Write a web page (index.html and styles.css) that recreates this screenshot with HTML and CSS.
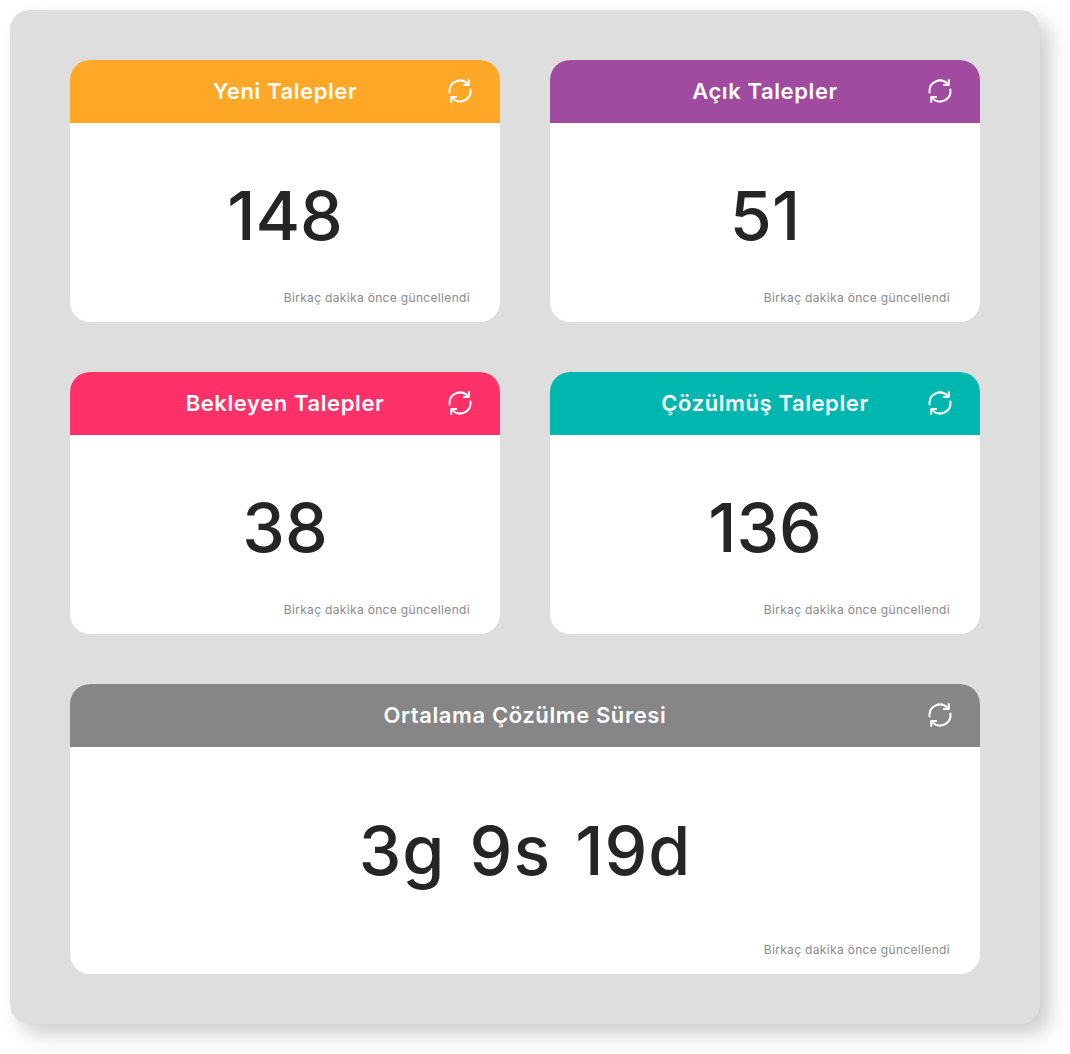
FILE: index.html
```html
<!DOCTYPE html>
<html lang="en">
<head>
    <meta charset="UTF-8">
    <meta name="viewport" content="width=device-width, initial-scale=1.0">
    <title>Talepler</title>
    <link rel="stylesheet" href="styles.css">
</head>
<body>
    <svg class="icon-defs" width="0" height="0">
        <symbol id="sync" viewBox="0 0 24 24">
            <g fill="none" stroke="currentColor" stroke-width="2" stroke-linecap="round" stroke-linejoin="round">
                <path d="M1.6 13.4A10.5 10.5 0 0 1 19.4 4.6"/>
                <path d="M22.4 10.6A10.5 10.5 0 0 1 4.6 19.4"/>
                <path d="M20.8 1V5.9H15.9"/>
                <path d="M3.2 23V18.1H8.1"/>
            </g>
        </symbol>
    </svg>

    <div class="panel">
        <section class="card">
            <header class="card-head orange">
                <h2>Yeni Talepler</h2>
                <svg class="refresh"><use href="#sync"></use></svg>
            </header>
            <div class="card-value">148</div>
            <p class="card-note">Birkaç dakika önce güncellendi</p>
        </section>

        <section class="card">
            <header class="card-head purple">
                <h2>Açık Talepler</h2>
                <svg class="refresh"><use href="#sync"></use></svg>
            </header>
            <div class="card-value">51</div>
            <p class="card-note">Birkaç dakika önce güncellendi</p>
        </section>

        <section class="card">
            <header class="card-head pink">
                <h2>Bekleyen Talepler</h2>
                <svg class="refresh"><use href="#sync"></use></svg>
            </header>
            <div class="card-value">38</div>
            <p class="card-note">Birkaç dakika önce güncellendi</p>
        </section>

        <section class="card">
            <header class="card-head teal">
                <h2>Çözülmüş Talepler</h2>
                <svg class="refresh"><use href="#sync"></use></svg>
            </header>
            <div class="card-value">136</div>
            <p class="card-note">Birkaç dakika önce güncellendi</p>
        </section>

        <section class="card card-wide">
            <header class="card-head gray">
                <h2>Ortalama Çözülme Süresi</h2>
                <svg class="refresh"><use href="#sync"></use></svg>
            </header>
            <div class="card-value">3g 9s 19d</div>
            <p class="card-note">Birkaç dakika önce güncellendi</p>
        </section>
    </div>
</body>
</html>
```

FILE: styles.css
```css
body {
    margin: 0;
    padding: 10px 10px 30px;
    background: #fff;
    font-family: Inter, "Liberation Sans", sans-serif;
    color: #252525;
}

.icon-defs {
    position: absolute;
}

.panel {
    width: 1030px;
    box-sizing: border-box;
    padding: 50px 60px;
    display: grid;
    grid-template-columns: 430px 430px;
    gap: 50px;
    background: #dedede;
    border-radius: 20px;
    box-shadow: 10px 10px 20px rgba(0, 0, 0, 0.2);
}

.card {
    height: 262px;
    display: flex;
    flex-direction: column;
    background: #fff;
    border-radius: 20px;
    overflow: hidden;
}

.card-wide {
    grid-column: 1 / 3;
    height: 290px;
}

.card-head {
    height: 63px;
    flex: none;
    display: grid;
    grid-template-columns: 1fr auto 1fr;
    align-items: center;
    color: #fff;
}

.card-head h2 {
    grid-column: 2;
    margin: 0 0 2px;
    font-size: 22px;
    font-weight: 600;
    letter-spacing: 0.6px;
}

.refresh {
    justify-self: end;
    width: 24px;
    height: 24px;
    margin: 0 28px 1px 0;
}

.orange { background: #ffa726; }
.purple { background: #a04ba0; }
.pink { background: #ff3168; }
.teal { background: #00b7af; }
.gray { background: #868686; }

.card-value {
    flex: 1;
    display: flex;
    align-items: center;
    justify-content: center;
    padding-top: 16px;
    font-size: 68px;
    font-weight: 500;
}

.card-wide .card-value {
    padding-top: 10px;
    letter-spacing: 1px;
    word-spacing: 5px;
}

.card-note {
    margin: 0;
    padding: 0 30px 16px;
    text-align: right;
    font-size: 12px;
    line-height: 16px;
    letter-spacing: 0.33px;
    color: #8a8a8a;
}
```
